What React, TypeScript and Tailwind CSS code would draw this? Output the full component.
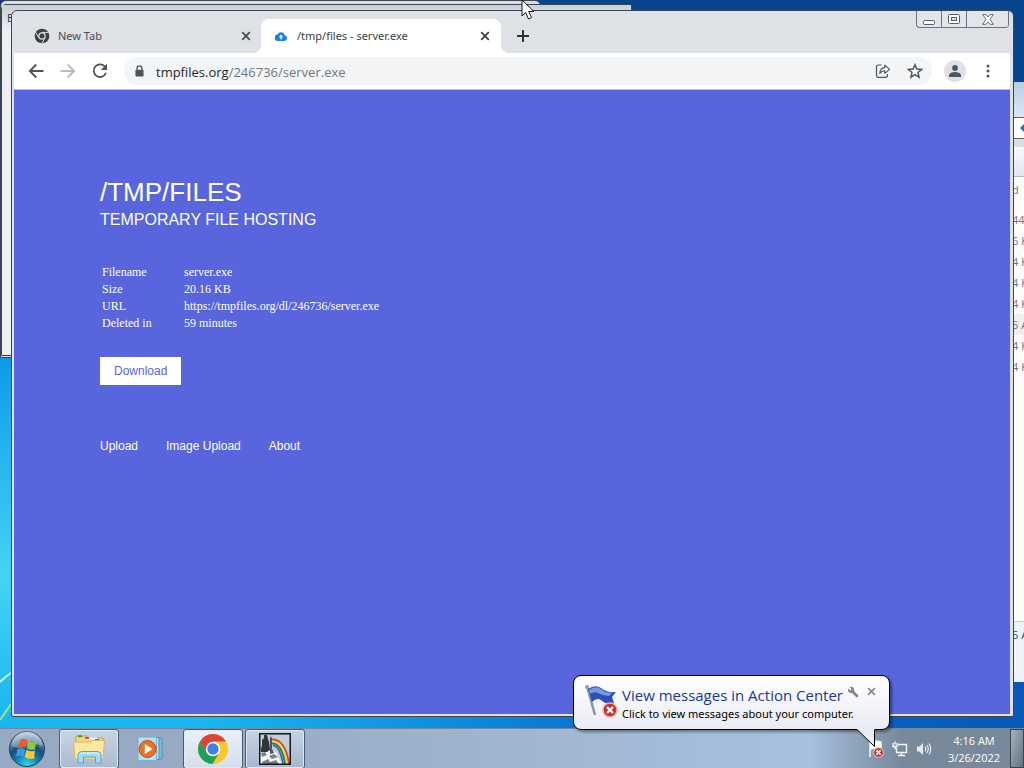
import React from "react";

const ui = "font-['Open_Sans','Noto_Sans',sans-serif]";

function ChromeMono() {
  return (
    <svg viewBox="0 0 24 24" className="size-4 shrink-0">
      <circle cx="12" cy="12" r="11" fill="#3c4043" />
      <circle cx="12" cy="12" r="5.6" fill="#dee1e6" />
      <circle cx="12" cy="12" r="3.8" fill="#3c4043" />
      <path d="M12 6.6H22M7.2 14.6 2.2 6M16.7 14.8 11.6 23" stroke="#dee1e6" strokeWidth="1.5" fill="none" />
    </svg>
  );
}

function ChromeColor() {
  return (
    <svg viewBox="0 0 32 32" className="size-8">
      <circle cx="16" cy="16" r="15" fill="#fbc72e" />
      <path d="M16 8.5H29A15 15 0 0 0 3 8.5L9.5 19.5Z" fill="#dc4437" />
      <path d="M3 8.5A15 15 0 0 0 15.5 31L22.4 19.5A7.3 7.3 0 0 1 9.6 19.6Z" fill="#1fa05a" />
      <circle cx="16" cy="16" r="7.2" fill="#fff" />
      <circle cx="16" cy="16" r="5.7" fill="#3f7fea" />
    </svg>
  );
}

function Close({ className }: { className: string }) {
  return (
    <svg viewBox="0 0 10 10" className={className}>
      <path d="M1.2 1.2 8.8 8.8M8.8 1.2 1.2 8.8" stroke="currentColor" strokeWidth="1.8" fill="none" />
    </svg>
  );
}

function Tabs() {
  return (
    <div className="flex h-[42px] items-end pl-[7px] font-['Noto_Sans','Open_Sans',sans-serif] text-[11px]">
      <div className="flex h-[34px] w-[240px] items-center pr-[10px] pl-[13px] text-[#4a4e53]">
        <ChromeMono />
        <span className="ml-2 grow">New Tab</span>
        <button aria-label="Close New Tab"><Close className="size-[10px]" /></button>
      </div>
      <div className="relative flex h-[34px] w-[240px] items-center rounded-t-[8px] bg-white pr-[11px] pl-[14px] text-[#3c4043]">
        <svg viewBox="0 0 8 8" className="absolute bottom-0 -left-2 size-2"><path d="M8 0A8 8 0 0 1 0 8H8Z" fill="#fff" /></svg>
        <svg viewBox="0 0 8 8" className="absolute -right-2 bottom-0 size-2"><path d="M0 0A8 8 0 0 0 8 8H0Z" fill="#fff" /></svg>
        <svg viewBox="0 0 24 18" className="h-[9px] w-3">
          <path d="M19.300 6.500A7.500 7.500 0 0 0 5.200 5 6.500 6.500 0 0 0 6.300 18H18.500A5.800 5.800 0 0 0 19.300 6.500Z" fill="#1380ee" />
          <path d="M12 5 7.500 10.500H10.500V14.500H13.500V10.500H16.500Z" fill="#fff" />
        </svg>
        <span className="ml-[10px] grow">/tmp/files - server.exe</span>
        <button aria-label="Close tab"><Close className="size-[10px]" /></button>
      </div>
      <button aria-label="New tab" className="ml-4 flex h-[34px] items-center text-[#303236]">
        <svg viewBox="0 0 12 12" className="size-3"><path d="M6 0V12M0 6H12" stroke="currentColor" strokeWidth="2" /></svg>
      </button>
    </div>
  );
}

function CaptionButtons() {
  const cell = "flex items-center justify-center border-r border-[#6d747d]";
  return (
    <div className="absolute top-0 right-1 flex h-[17px] overflow-hidden rounded-b-[4px] border-b border-l border-[#6d747d] bg-[#e2e5e9]">
      <button aria-label="Minimize" className={cell + " w-[25px]"}>
        <svg viewBox="0 0 12 14" className="h-[14px] w-3"><rect x=".5" y="8.5" width="11" height="4" rx="1" fill="#fff" stroke="#555c66" /></svg>
      </button>
      <button aria-label="Restore" className={cell + " w-[25px]"}>
        <svg viewBox="0 0 12 10" className="h-[10px] w-3"><rect x=".5" y=".5" width="11" height="9" rx="1" fill="#fff" stroke="#555c66" /><rect x="3.5" y="3.5" width="5" height="3" fill="#dfe3e8" stroke="#555c66" /></svg>
      </button>
      <button aria-label="Close window" className={cell + " w-[42px]"}>
        <svg viewBox="0 0 12 11" className="h-[11px] w-3"><path d="M.6.6H4L6 3 8 .6H11.4L7.9 5.3 11.4 10.3H8L6 7.8 4 10.3H.6L4.1 5.3Z" fill="#fff" stroke="#555c66" strokeWidth=".9" /></svg>
      </button>
    </div>
  );
}

function Toolbar() {
  return (
    <div className="flex h-[37px] items-center border-b border-[#b9bde6] bg-white pr-[15px] pl-[14px] text-[#505357]">
      <button aria-label="Back">
        <svg viewBox="0 0 16 16" className="size-4"><path d="M15.5 8H2M8.3 1.5 1.8 8 8.3 14.5" fill="none" stroke="currentColor" strokeWidth="1.8" /></svg>
      </button>
      <button aria-label="Forward" className="ml-4 text-[#b9bbbe]">
        <svg viewBox="0 0 16 16" className="size-4"><path d="M.5 8H14M7.7 1.5 14.2 8 7.7 14.5" fill="none" stroke="currentColor" strokeWidth="1.8" /></svg>
      </button>
      <button aria-label="Reload" className="ml-4">
        <svg viewBox="0 0 16 16" className="size-4"><path d="M13.4 4.3A6.3 6.3 0 1 0 14 9.8" fill="none" stroke="currentColor" strokeWidth="1.8" /><path d="M15 .8V7H8.8Z" fill="currentColor" /></svg>
      </button>
      <div className="ml-4 flex h-7 grow items-center rounded-full bg-linear-to-b from-[#f4f5f6] to-[#f1f3f4] pr-[9px] pl-[11px]">
        <svg viewBox="0 0 10 13" className="h-[12px] w-[9px]"><path d="M2.3 6V3.5a2.7 2.7 0 0 1 5.4 0V6" fill="none" stroke="currentColor" strokeWidth="1.5" /><rect x=".5" y="5" width="9" height="7.5" rx="1" fill="currentColor" /></svg>
        <a href="#address" className="ml-3 grow pt-px text-[13px] leading-5 text-[#75787c]"><span className="text-[#25272a]">tmpfiles.org</span>/246736/server.exe</a>
        <button aria-label="Share">
          <svg viewBox="0 0 16 16" className="size-4"><path d="M6.5 2H3.5Q1.5 2 1.5 4V12.5Q1.5 14.3 3.5 14.3H10.5Q12.5 14.3 12.5 12.5V11" fill="none" stroke="currentColor" strokeWidth="1.2" /><path d="M4.8 10.5C4.9 6.7 6.5 4.8 9.8 4.6V2.1L14.6 6.3 9.8 10.3V7.7C7.4 7.7 6 8.5 4.8 10.5Z" fill="#f4f5f6" stroke="currentColor" strokeWidth="1.1" strokeLinejoin="round" /></svg>
        </button>
        <button aria-label="Bookmark this tab" className="ml-4">
          <svg viewBox="0 0 24 24" className="size-4"><path d="m12 2.6 2.8 6.5 7 .6-5.3 4.6 1.6 6.9-6.1-3.7-6.1 3.7 1.6-6.9L2.2 9.7l7-.6Z" fill="none" stroke="currentColor" strokeWidth="2.200" /></svg>
        </button>
      </div>
      <button aria-label="Profile" className="ml-3 flex size-[22px] items-center justify-center rounded-full bg-[#dee1e8]">
        <svg viewBox="0 0 12 12" className="size-3"><circle cx="6" cy="3" r="2.9" fill="#4c5564" /><path d="M0 12V9.8Q1.5 7 6 7t6 2.8V12Z" fill="#4c5564" /></svg>
      </button>
      <button aria-label="Menu" className="ml-[15px]">
        <svg viewBox="0 0 14 14" fill="currentColor" className="size-[14px]"><circle cx="7" cy="2" r="1.5" /><circle cx="7" cy="7" r="1.5" /><circle cx="7" cy="12" r="1.5" /></svg>
      </button>
    </div>
  );
}

const details = [
  ["Filename", "server.exe"],
  ["Size", "20.16 KB"],
  ["URL", "https://tmpfiles.org/dl/246736/server.exe"],
  ["Deleted in", "59 minutes"],
];

function Page() {
  return (
    <main className="grow overflow-hidden bg-[#5865dc] px-[86px] pt-[86px] font-['Liberation_Sans',Arial,sans-serif] text-white">
      <h1 className="text-[26px] leading-8">/TMP/FILES</h1>
      <h2 className="text-[16px] leading-6">TEMPORARY FILE HOSTING</h2>
      <table className="mt-8 ml-[2px] font-['Liberation_Serif','Times_New_Roman',serif] text-[12px] leading-[17px]">
        <tbody>
          {details.map(([label, value]) => (
            <tr key={label}>
              <th scope="row" className="w-[82px] p-0 text-left font-normal">{label}</th>
              <td className="p-0">{value}</td>
            </tr>
          ))}
        </tbody>
      </table>
      <a href="#download" className="mt-[25px] inline-block bg-white px-[14px] text-[12px] leading-7 text-[#5865dc]">Download</a>
      <nav className="mt-[51px] flex gap-7 text-[12px] leading-5">
        <a href="#upload">Upload</a>
        <a href="#image-upload">Image Upload</a>
        <a href="#about">About</a>
      </nav>
    </main>
  );
}

function BrowserWindow() {
  return (
    <section className="absolute top-[10px] right-[10px] bottom-[51px] left-[11px] flex flex-col rounded-t-[6px] rounded-b-[2px] border border-[#3d4650] bg-[#dee1e6] pr-[3px] pb-[2px] pl-[2px]">
      <Tabs />
      <CaptionButtons />
      <Toolbar />
      <Page />
    </section>
  );
}

const sizes = ["44", "6 K", "4 K", "4 K", "4 K", "5 A", "4 K", "4 K"];

function ExplorerWindow() {
  return (
    <section className="absolute top-[82px] right-0 bottom-[86px] flex w-3 flex-col overflow-hidden bg-[#fdfcfe] text-[11px] whitespace-nowrap text-[#75717a]">
      <div className="h-[35px] shrink-0 bg-linear-to-b from-[#b6cfe3] to-[#dce8f2]" />
      <div className="flex h-[22px] shrink-0 items-center border-y border-[#59636c] bg-white pl-2">
        <svg viewBox="0 0 8 10" className="h-[10px] w-2 shrink-0"><path d="M0 5 5 0V3H8V7H5V10Z" fill="#28709e" /></svg>
      </div>
      <div className="h-[8px] shrink-0 bg-[#d7dfe2]" />
      <div className="h-[30px] shrink-0 border-b border-[#aebac8] bg-linear-to-b from-[#f8faff] to-[#e0e6f2]" />
      <div className="leading-[26px]">d</div>
      <div className="pt-[6px] leading-[21px]">
        {sizes.map((s, i) => (
          <div key={i} className={i === 5 ? "bg-[#eeedf0]" : ""}>{s}</div>
        ))}
      </div>
      <div className="mt-auto h-[61px] border-t border-[#c6ccd2] bg-[#edf3fa] pt-[5px] text-[#414850]">5 A</div>
    </section>
  );
}

function StartOrb() {
  return (
    <svg viewBox="0 0 38 38" className="size-[38px]">
      <defs>
        <radialGradient id="orb" cx=".5" cy=".95" r=".9">
          <stop offset="0" stopColor="#38d5ef" />
          <stop offset=".38" stopColor="#117caf" />
          <stop offset=".62" stopColor="#174d77" />
          <stop offset="1" stopColor="#b4c7d8" />
        </radialGradient>
      </defs>
      <circle cx="19" cy="19" r="17.5" fill="url(#orb)" stroke="#1d3d58" />
      <path d="M4 16A15 15 0 0 1 34 16Q27 12 19 16T4 16Z" fill="#dce9f2" opacity=".35" />
      <path d="M12.500 9.500Q16 7.500 19.200 10.500L17.500 17.800Q13.500 15.500 8.500 18 12 15 12.500 9.500Z" fill="#ed5a27" />
      <path d="M20.400 11Q24.500 13.700 30 11Q27 14 27.200 19 23 21 18.700 18.300Z" fill="#91c53f" />
      <path d="M9.200 19.400Q13.300 17 17.100 19.400L15.400 26.600Q11.500 24.200 7.200 26.800 9.500 23.500 9.200 19.400Z" fill="#3a9be0" />
      <path d="M18.400 19.800Q22.700 22.600 26.900 20.400 26 26 26.500 28.500 20.600 29.700 16.700 27Z" fill="#fac92d" />
    </svg>
  );
}

function FolderIcon() {
  return (
    <svg viewBox="0 0 34 32" className="h-8 w-[34px]">
      <path d="M4 7V3H15V5H31V14H4Z" fill="#f1d681" stroke="#c6a34f" />
      <rect x="6" y="2.2" width="4" height="2" fill="#36a43b" />
      <rect x="14" y="4.5" width="11" height="2" fill="#fff" />
      <rect x="13" y="4" width="4" height="2" fill="#d5542d" />
      <rect x="23" y="6" width="4" height="2" fill="#3977cf" />
      <path d="M1.5 9H18L20 7.5H32.5L31 26H3Z" fill="#fae9a2" stroke="#d6b867" />
      <path d="M6 30V22Q6 18.5 10 18.5H25Q29 18.5 29 22V30H23.5V24H11.5V30Z" fill="#a6dbf4" stroke="#51a7d6" />
      <path d="M7.5 22Q8 20 11 20H25Q27.5 20 27.5 22" stroke="#e4f8ff" fill="none" />
    </svg>
  );
}

function PlayerIcon() {
  return (
    <svg viewBox="0 0 28 26" className="h-[26px] w-7">
      <path d="M8 2H25V23H8Z" fill="#7dbad8" stroke="#5294b8" />
      <path d="M5 1.5H22V23.5H5Z" fill="#b9deef" stroke="#5294b8" />
      <path d="M1 1H19.500V24.500H1Z" fill="#b8dff1" stroke="#71b1d1" />
      <circle cx="10.500" cy="13" r="8.500" fill="#ed7220" stroke="#bd4e13" />
      <path d="M7.800 8V18L15.500 13Z" fill="#fff" />
    </svg>
  );
}

function RainbowIcon() {
  return (
    <svg viewBox="0 0 32 32" className="size-8">
      <rect width="32" height="32" fill="#c3cdd6" />
      <path d="M1 18 9 16 17 19 23 31H1Z" fill="#f3f5f5" />
      <path d="M3 13V7L5 5V2H8L9 6 10 9 11 17 8 19H2V15Z" fill="#30363a" />
      <path d="M12 3 13 6V16L15 20 11 21V5Z" fill="#4c5458" />
      <path d="M13 6.500C22 6 28 16 30 31" fill="none" stroke="#d44237" strokeWidth="2" />
      <path d="M13 8.500C21 8 26 17 28 31" fill="none" stroke="#efd553" strokeWidth="2" />
      <path d="M13 10.500C20 10.500 24 18 26 31" fill="none" stroke="#2c874e" strokeWidth="2" />
      <path d="M14 12.500C19 13 22 20 24 31" fill="none" stroke="#3c5fa7" strokeWidth="1.500" />
      <path d="M2 20 6 19 8 22 3 24ZM10 23 15 21 19 24 13 26ZM3 29 9 26 11 29 17 27 20 31H3Z" fill="#778087" />
      <rect x=".75" y=".75" width="30.500" height="30.500" fill="none" stroke="#16181a" strokeWidth="1.500" />
    </svg>
  );
}

function ErrorDot({ className }: { className: string }) {
  return (
    <svg viewBox="0 0 16 16" className={className}>
      <circle cx="8" cy="8" r="7" fill="#c92d2d" stroke="#e9b0ad" strokeWidth="1.500" />
      <path d="m5 5 6 6m0-6-6 6" stroke="#fff" strokeWidth="2.400" />
    </svg>
  );
}

function Taskbar() {
  const app = "flex h-10 w-[60px] items-center justify-center rounded-[3px] border border-[#4c5b6d] shadow-[inset_0_0_0_1px_#e0e8f2]";
  return (
    <footer className="absolute inset-x-0 bottom-0 flex h-10 items-center border-t border-[#71879b] bg-linear-to-r from-[#98a9c4] from-20% via-[#a8c1df] via-79% to-[#78899b] to-88%">
      <button aria-label="Start" className="ml-2"><StartOrb /></button>
      <button aria-label="Windows Explorer" className={app + " ml-[13px] bg-linear-to-b from-[#c8d5e5] to-[#abbad0]"}><FolderIcon /></button>
      <button aria-label="Media Player" className="flex w-[64px] justify-center"><PlayerIcon /></button>
      <button aria-label="Google Chrome" className={app + " bg-linear-to-b from-[#eaf0f8] to-[#d4deeb]"}><ChromeColor /></button>
      <button aria-label="Rainbow" className={app + " ml-[2px] bg-linear-to-b from-[#c5d3e3] to-[#a7b7ce]"}><RainbowIcon /></button>
      <div className="ml-auto flex h-full items-center text-white">
        <button aria-label="Action Center" className="relative h-[18px] w-4">
          <svg viewBox="0 0 16 18" className="h-[18px] w-4"><path d="M2 2V17M3 3Q7 0 13 2V9Q8 7 3 9Z" stroke="#f7f9fa" strokeWidth="1.500" fill="#fff" /></svg>
          <ErrorDot className="absolute right-0 bottom-0 size-[11px]" />
        </button>
        <button aria-label="Network" className="ml-2">
          <svg viewBox="0 0 16 16" className="size-4"><path d="M6 3.500H14.500V11.500H4.500V8M6 14.500H13M9.500 12V15M1 2V5.500H5V2M3 .5V3.500M3 5.500V7.500H5" fill="none" stroke="#f4f7f9" strokeWidth="1.400" /></svg>
        </button>
        <button aria-label="Volume" className="ml-2">
          <svg viewBox="0 0 16 16" className="size-4"><path d="M1 5.500H3.500L7 2V14L3.500 10.500H1Z" fill="#e5eaee" /><path d="M9 5.500Q10.500 8 9 10.500M11 4Q13.500 8 11 12M13 2.500Q16.500 8 13 13.500" fill="none" stroke="#e9eff3" strokeWidth="1.100" /></svg>
        </button>
        <div className="ml-[15px] w-[54px] text-center text-[11px] leading-[17px]">
          <div>4:16 AM</div>
          <div>3/26/2022</div>
        </div>
        <button aria-label="Show desktop" className="ml-[9px] h-full w-[14px] border border-[#39434d] bg-linear-to-br from-[#a6b4c0] to-[#62717f]" />
      </div>
    </footer>
  );
}

function Notification() {
  return (
    <aside className="absolute right-[134px] bottom-[38px] flex h-[55px] w-[317px] rounded-[8px] border border-black bg-linear-to-b from-white to-[#eaecf4] pt-[8px] pl-[10px] shadow-[2px_2px_3px_#0006]">
      <div className="relative h-[34px] w-[34px]">
        <svg viewBox="0 0 34 34" className="size-[34px]">
          <path d="m3 2 8 29" stroke="#8993a0" strokeWidth="2.500" />
          <path d="M4 5Q11 0 17 4 23 9 32 8L28 13 30 19Q22 21 17 16 13 13 8 18Z" fill="#2d4fb8" />
          <path d="M5 6Q11 1 17 5 22 9 28 9L25 12Q19 12 14 9 10 7 6 10Z" fill="#7b97e2" />
          <circle cx="3" cy="3" r="2" fill="#9a9fa5" />
        </svg>
        <ErrorDot className="absolute right-0 bottom-0 size-4" />
      </div>
      <div className="ml-1">
        <div className="flex">
          <a href="#action-center" className="text-[15px] leading-[22px] text-[#1d3795]">View messages in Action Center</a>
          <button aria-label="Options" className="ml-1 self-start pt-[2px] text-[#858585]">
            <svg viewBox="0 0 12 12" className="size-3"><path d="M5.500 5.500 10 10" stroke="currentColor" strokeWidth="2.800" strokeLinecap="round" /><path d="M1 2.500 3.500 4.500 4.500 3.500 2.800 1Q6 .2 7 2.800T5 7Q2 7.500 1 5Z" fill="currentColor" /></svg>
          </button>
          <button aria-label="Dismiss" className="ml-2 self-start pt-[3px] text-[#858585]"><Close className="size-[9px]" /></button>
        </div>
        <p className="font-['Noto_Sans','Open_Sans',sans-serif] text-[11px] leading-4 text-black">Click to view messages about your computer.</p>
      </div>
      <svg viewBox="0 0 20 20" className="absolute top-[52px] right-[13px] size-5">
        <path d="M1 0V1.500L19 19V0Z" fill="#eaecf4" />
        <path d="m1 1.500 17.500 17V1.500" fill="none" stroke="#000" />
      </svg>
    </aside>
  );
}

export default function App() {
  return (
    <div className={"relative h-screen w-full overflow-hidden bg-[#1a96de] " + ui}>
      <svg viewBox="0 0 1024 768" preserveAspectRatio="none" className="absolute inset-0 size-full">
        <defs>
          <linearGradient id="left" x1="0" y1="0" x2="0" y2="1">
            <stop offset="0" stopColor="#152d85" /><stop offset=".46" stopColor="#0c9ae9" /><stop offset=".75" stopColor="#43d4f4" /><stop offset="1" stopColor="#0baeef" />
          </linearGradient>
          <linearGradient id="right">
            <stop offset=".2" stopColor="#0870cf" stopOpacity="0" /><stop offset=".6" stopColor="#0870d0" /><stop offset="1" stopColor="#0759b5" />
          </linearGradient>
        </defs>
        <path d="M0 0H1024V768H0Z" fill="url(#left)" />
        <path d="M0 0H1024V768H0Z" fill="url(#right)" />
        <path d="M500 0H1024V90H500Z" fill="#07458f" />
        <path d="M0 682Q7 675 14 671" fill="none" stroke="#c6f1fa" strokeWidth="2" />
        <path d="M0 720 14 700" stroke="#a5e383" strokeWidth="2" />
      </svg>
      <section className="absolute top-0 left-0 h-[358px] w-[541px] rounded-t-[6px] border border-[#3d4650] bg-[#d8dde4]" />
      <section className="absolute top-[4px] left-[1px] h-[352px] w-[631px] rounded-t-[5px] border border-[#3d4650] bg-[#edeef2] pt-[5px] pl-[5px] text-[11px] leading-4 text-[#333]">
        <div className="absolute inset-x-0 top-0 h-6 bg-linear-to-b from-[#c7ced7] to-[#edeef2]" />
        <span className="relative">E</span>
      </section>
      <ExplorerWindow />
      <BrowserWindow />
      <Taskbar />
      <Notification />
      <svg viewBox="0 0 14 20" className="absolute top-0 left-[521px] h-5 w-[14px]">
        <path d="M1 0V16L4.700 12.500 7.500 19 10.500 17.500 7.700 11.500H12.800Z" fill="#fff" stroke="#15171b" />
      </svg>
    </div>
  );
}
